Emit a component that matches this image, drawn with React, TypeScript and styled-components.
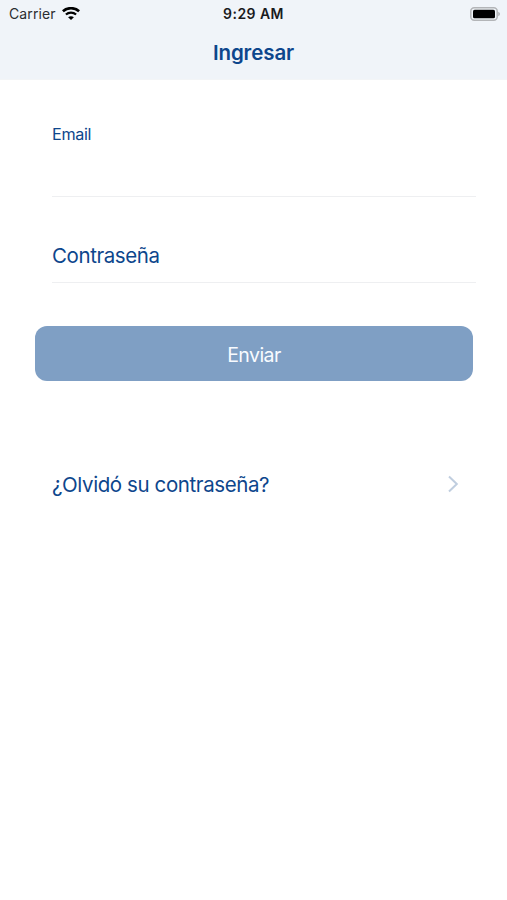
import React, { useState } from "react";
import styled, { createGlobalStyle } from "styled-components";

const GlobalStyle = createGlobalStyle`
  * {
    box-sizing: border-box;
  }

  body {
    margin: 0;
    background-color: #ffffff;
    font-family: Inter, "Liberation Sans", sans-serif;
  }
`;

const blue = "#0d468c";

const PageContainer = styled.div`
  width: 507px;
  height: 900px;
  overflow: hidden;
  background-color: #ffffff;
`;

const Header = styled.header`
  height: 80px;
  background-color: #f0f4f9;
  border-bottom: 1px solid #f3f5f7;
`;

const StatusBar = styled.div`
  height: 27px;
  padding: 0 6px 0 9px;
  display: grid;
  grid-template-columns: 1fr auto 1fr;
  align-items: center;
`;

const CarrierContainer = styled.div`
  display: flex;
  align-items: center;
  gap: 6px;
  color: #2b2d30;
  font-size: 14px;
  letter-spacing: 0.1px;
`;

const Clock = styled.div`
  margin-right: 3px;
  color: #1a1b1d;
  font-size: 14px;
  font-weight: 600;
  letter-spacing: 0.45px;
`;

const BatteryContainer = styled.div`
  display: flex;
  justify-content: flex-end;
`;

const Title = styled.h1`
  margin: 0;
  height: 51px;
  line-height: 51px;
  text-align: center;
  color: ${blue};
  font-size: 20.5px;
  font-weight: 600;
  letter-spacing: -0.1px;
`;

const Form = styled.form`
  padding: 42px 31px 0 35px;
`;

const Field = styled.label<{ height: number }>`
  height: ${props => props.height}px;
  margin-left: 17px;
  display: flex;
  flex-direction: column;
  border-bottom: 1px solid #eeeff1;
`;

const FieldLabel = styled.span<{ size: number }>`
  color: ${blue};
  font-size: ${props => props.size}px;
  line-height: 24px;
  letter-spacing: -0.02em;
`;

const Input = styled.input`
  width: 100%;
  min-height: 0;
  flex: 1;
  padding: 0;
  border: none;
  outline: none;
  background: transparent;
  color: ${blue};
  font-family: inherit;
  font-size: 20px;
`;

const PasswordContainer = styled.div`
  margin-top: 47px;
`;

const SubmitButton = styled.button`
  width: 438px;
  height: 55px;
  margin-top: 43px;
  padding: 2px 0 0;
  border: none;
  border-radius: 12px;
  background-color: #7f9fc4;
  color: #f8fbff;
  font-family: inherit;
  font-size: 19.5px;
  letter-spacing: -0.55px;
`;

const ForgotLink = styled.a`
  height: 40px;
  margin: 83px 48px 0 52px;
  display: flex;
  align-items: center;
  justify-content: space-between;
  color: ${blue};
  font-size: 20.5px;
  letter-spacing: -0.4px;
  text-decoration: none;
`;

function WifiIcon() {
  return (
    <svg width="18" height="14" viewBox="0 0 18 14" fill="none">
      <path d="M0.9 4.3C5.4 0.1 12.6 0.1 17.1 4.3" stroke="#000" strokeWidth="2.6" />
      <path d="M3.9 7.5C6.8 4.9 11.2 4.9 14.1 7.5" stroke="#000" strokeWidth="2.2" />
      <path d="M9 13L6.1 10.2C7.8 8.8 10.2 8.8 11.9 10.2Z" fill="#000" />
    </svg>
  );
}

function BatteryIcon() {
  return (
    <svg width="31" height="14" viewBox="0 0 31 14" fill="none">
      <rect x="0.8" y="0.8" width="26.4" height="12.4" rx="3.4" stroke="#b3b5b8" strokeWidth="1.5" />
      <rect x="3" y="2.7" width="22" height="8.6" rx="1.6" fill="#000" />
      <path d="M28.2 4.8C30.6 5.6 30.6 8.4 28.2 9.2Z" fill="#b3b5b8" />
    </svg>
  );
}

function ChevronIcon() {
  return (
    <svg width="12" height="18" viewBox="0 0 12 18" fill="none">
      <path d="M2 1.5L9.8 9L2 16.5" stroke="#c0cedf" strokeWidth="2" />
    </svg>
  );
}

function App() {
  const [email, setEmail] = useState("");
  const [password, setPassword] = useState("");

  return (
    <PageContainer>
      <GlobalStyle />
      <Header>
        <StatusBar>
          <CarrierContainer>
            Carrier
            <WifiIcon />
          </CarrierContainer>
          <Clock>9:29 AM</Clock>
          <BatteryContainer>
            <BatteryIcon />
          </BatteryContainer>
        </StatusBar>
        <Title>Ingresar</Title>
      </Header>
      <Form onSubmit={e => e.preventDefault()}>
        <Field height={75}>
          <FieldLabel size={16.2}>Email</FieldLabel>
          <Input type="email" value={email} onChange={e => setEmail(e.target.value)} />
        </Field>
        <PasswordContainer>
          <Field height={39}>
            <FieldLabel size={20.5}>Contraseña</FieldLabel>
            <Input type="password" value={password} onChange={e => setPassword(e.target.value)} />
          </Field>
        </PasswordContainer>
        <SubmitButton type="submit">Enviar</SubmitButton>
      </Form>
      <ForgotLink href="#">
        ¿Olvidó su contraseña?
        <ChevronIcon />
      </ForgotLink>
    </PageContainer>
  );
}

export default App;
